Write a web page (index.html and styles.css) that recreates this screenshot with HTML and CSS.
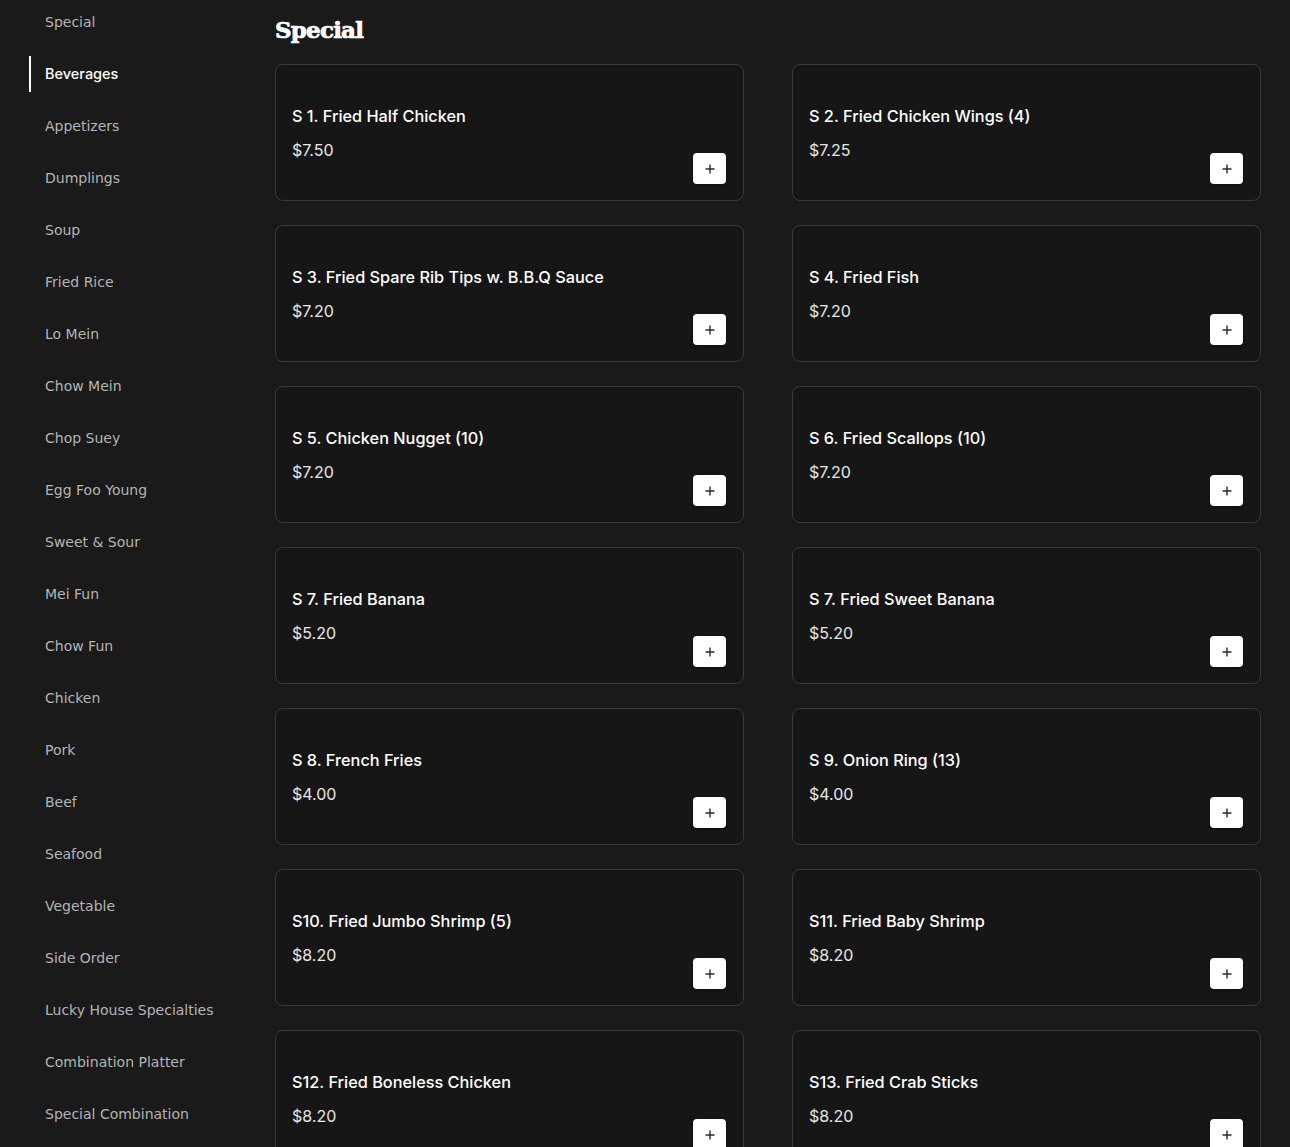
FILE: index.html
```html
<!DOCTYPE html>
<html lang="en">
<head>
<meta charset="utf-8">
<title>Menu</title>
<link rel="stylesheet" href="styles.css">
</head>
<body>
<div class="page">
  <nav class="sidebar">
    <a class="cat">Special</a>
    <a class="cat active">Beverages</a>
    <a class="cat">Appetizers</a>
    <a class="cat">Dumplings</a>
    <a class="cat">Soup</a>
    <a class="cat">Fried Rice</a>
    <a class="cat">Lo Mein</a>
    <a class="cat">Chow Mein</a>
    <a class="cat">Chop Suey</a>
    <a class="cat">Egg Foo Young</a>
    <a class="cat">Sweet &amp; Sour</a>
    <a class="cat">Mei Fun</a>
    <a class="cat">Chow Fun</a>
    <a class="cat">Chicken</a>
    <a class="cat">Pork</a>
    <a class="cat">Beef</a>
    <a class="cat">Seafood</a>
    <a class="cat">Vegetable</a>
    <a class="cat">Side Order</a>
    <a class="cat">Lucky House Specialties</a>
    <a class="cat">Combination Platter</a>
    <a class="cat">Special Combination</a>
  </nav>
  <main class="content">
    <h1 class="section-title">Special</h1>
    <div class="grid">
      <div class="card"><div class="info"><div class="name">S 1. Fried Half Chicken</div><div class="price">$7.50</div></div><button class="add"><svg viewBox="0 0 12 12" width="12" height="12"><path d="M6 1.5v9M1.5 6h9" stroke="#2b2b2b" stroke-width="1.4" fill="none"/></svg></button></div>
      <div class="card"><div class="info"><div class="name">S 2. Fried Chicken Wings (4)</div><div class="price">$7.25</div></div><button class="add"><svg viewBox="0 0 12 12" width="12" height="12"><path d="M6 1.5v9M1.5 6h9" stroke="#2b2b2b" stroke-width="1.4" fill="none"/></svg></button></div>
      <div class="card"><div class="info"><div class="name">S 3. Fried Spare Rib Tips w. B.B.Q Sauce</div><div class="price">$7.20</div></div><button class="add"><svg viewBox="0 0 12 12" width="12" height="12"><path d="M6 1.5v9M1.5 6h9" stroke="#2b2b2b" stroke-width="1.4" fill="none"/></svg></button></div>
      <div class="card"><div class="info"><div class="name">S 4. Fried Fish</div><div class="price">$7.20</div></div><button class="add"><svg viewBox="0 0 12 12" width="12" height="12"><path d="M6 1.5v9M1.5 6h9" stroke="#2b2b2b" stroke-width="1.4" fill="none"/></svg></button></div>
      <div class="card"><div class="info"><div class="name">S 5. Chicken Nugget (10)</div><div class="price">$7.20</div></div><button class="add"><svg viewBox="0 0 12 12" width="12" height="12"><path d="M6 1.5v9M1.5 6h9" stroke="#2b2b2b" stroke-width="1.4" fill="none"/></svg></button></div>
      <div class="card"><div class="info"><div class="name">S 6. Fried Scallops (10)</div><div class="price">$7.20</div></div><button class="add"><svg viewBox="0 0 12 12" width="12" height="12"><path d="M6 1.5v9M1.5 6h9" stroke="#2b2b2b" stroke-width="1.4" fill="none"/></svg></button></div>
      <div class="card"><div class="info"><div class="name">S 7. Fried Banana</div><div class="price">$5.20</div></div><button class="add"><svg viewBox="0 0 12 12" width="12" height="12"><path d="M6 1.5v9M1.5 6h9" stroke="#2b2b2b" stroke-width="1.4" fill="none"/></svg></button></div>
      <div class="card"><div class="info"><div class="name">S 7. Fried Sweet Banana</div><div class="price">$5.20</div></div><button class="add"><svg viewBox="0 0 12 12" width="12" height="12"><path d="M6 1.5v9M1.5 6h9" stroke="#2b2b2b" stroke-width="1.4" fill="none"/></svg></button></div>
      <div class="card"><div class="info"><div class="name">S 8. French Fries</div><div class="price">$4.00</div></div><button class="add"><svg viewBox="0 0 12 12" width="12" height="12"><path d="M6 1.5v9M1.5 6h9" stroke="#2b2b2b" stroke-width="1.4" fill="none"/></svg></button></div>
      <div class="card"><div class="info"><div class="name">S 9. Onion Ring (13)</div><div class="price">$4.00</div></div><button class="add"><svg viewBox="0 0 12 12" width="12" height="12"><path d="M6 1.5v9M1.5 6h9" stroke="#2b2b2b" stroke-width="1.4" fill="none"/></svg></button></div>
      <div class="card"><div class="info"><div class="name">S10. Fried Jumbo Shrimp (5)</div><div class="price">$8.20</div></div><button class="add"><svg viewBox="0 0 12 12" width="12" height="12"><path d="M6 1.5v9M1.5 6h9" stroke="#2b2b2b" stroke-width="1.4" fill="none"/></svg></button></div>
      <div class="card"><div class="info"><div class="name">S11. Fried Baby Shrimp</div><div class="price">$8.20</div></div><button class="add"><svg viewBox="0 0 12 12" width="12" height="12"><path d="M6 1.5v9M1.5 6h9" stroke="#2b2b2b" stroke-width="1.4" fill="none"/></svg></button></div>
      <div class="card"><div class="info"><div class="name">S12. Fried Boneless Chicken</div><div class="price">$8.20</div></div><button class="add"><svg viewBox="0 0 12 12" width="12" height="12"><path d="M6 1.5v9M1.5 6h9" stroke="#2b2b2b" stroke-width="1.4" fill="none"/></svg></button></div>
      <div class="card"><div class="info"><div class="name">S13. Fried Crab Sticks</div><div class="price">$8.20</div></div><button class="add"><svg viewBox="0 0 12 12" width="12" height="12"><path d="M6 1.5v9M1.5 6h9" stroke="#2b2b2b" stroke-width="1.4" fill="none"/></svg></button></div>
    </div>
  </main>
</div>
</body>
</html>
```

FILE: styles.css
```css
html, body {
  margin: 0;
  padding: 0;
  background: #1a1a1a;
}
body {
  font-family: "DejaVu Sans", sans-serif;
  color: #fff;
}
.page {
  display: flex;
  align-items: flex-start;
}
.sidebar {
  width: 246px;
  flex: none;
  padding: 4px 0 0 29px;
  display: flex;
  flex-direction: column;
  gap: 16px;
}
.cat {
  display: block;
  height: 36px;
  line-height: 36px;
  padding-left: 16px;
  font-size: 14px;
  color: #b4b4b4;
  white-space: nowrap;
}
.cat.active {
  color: #fff;
  border-left: 2px solid #fff;
  padding-left: 14px;
  font-family: "Inter", sans-serif;
  font-weight: 500;
  font-size: 14.5px;
}
.content {
  flex: 1;
  padding-right: 29px;
}
.section-title {
  margin: 13px 0 17px;
  font-family: "DejaVu Serif", serif;
  font-weight: 700;
  font-size: 23px;
  line-height: 34px;
  letter-spacing: -0.8px;
  -webkit-text-stroke: 0.7px #fff;
  color: #fff;
}
.grid {
  display: grid;
  grid-template-columns: 469px 469px;
  column-gap: 48px;
  row-gap: 24px;
}
.card {
  box-sizing: border-box;
  height: 137px;
  border: 1px solid #3a3a3a;
  border-radius: 8px;
  background: #161616;
  padding: 16px 17px 16px 16px;
  display: flex;
  justify-content: space-between;
}
.info {
  padding-top: 23px;
  font-family: "Inter", sans-serif;
}
.name {
  font-size: 16.3px;
  line-height: 24px;
  font-weight: 500;
  color: #fff;
}
.price {
  margin-top: 10px;
  font-size: 16px;
  line-height: 24px;
  color: #e6e6e6;
}
.add {
  align-self: flex-end;
  width: 33px;
  height: 31px;
  padding: 0;
  border: none;
  border-radius: 4px;
  background: #fff;
  display: flex;
  align-items: center;
  justify-content: center;
  box-shadow: 0 1px 3px rgba(0,0,0,0.4);
}
```
